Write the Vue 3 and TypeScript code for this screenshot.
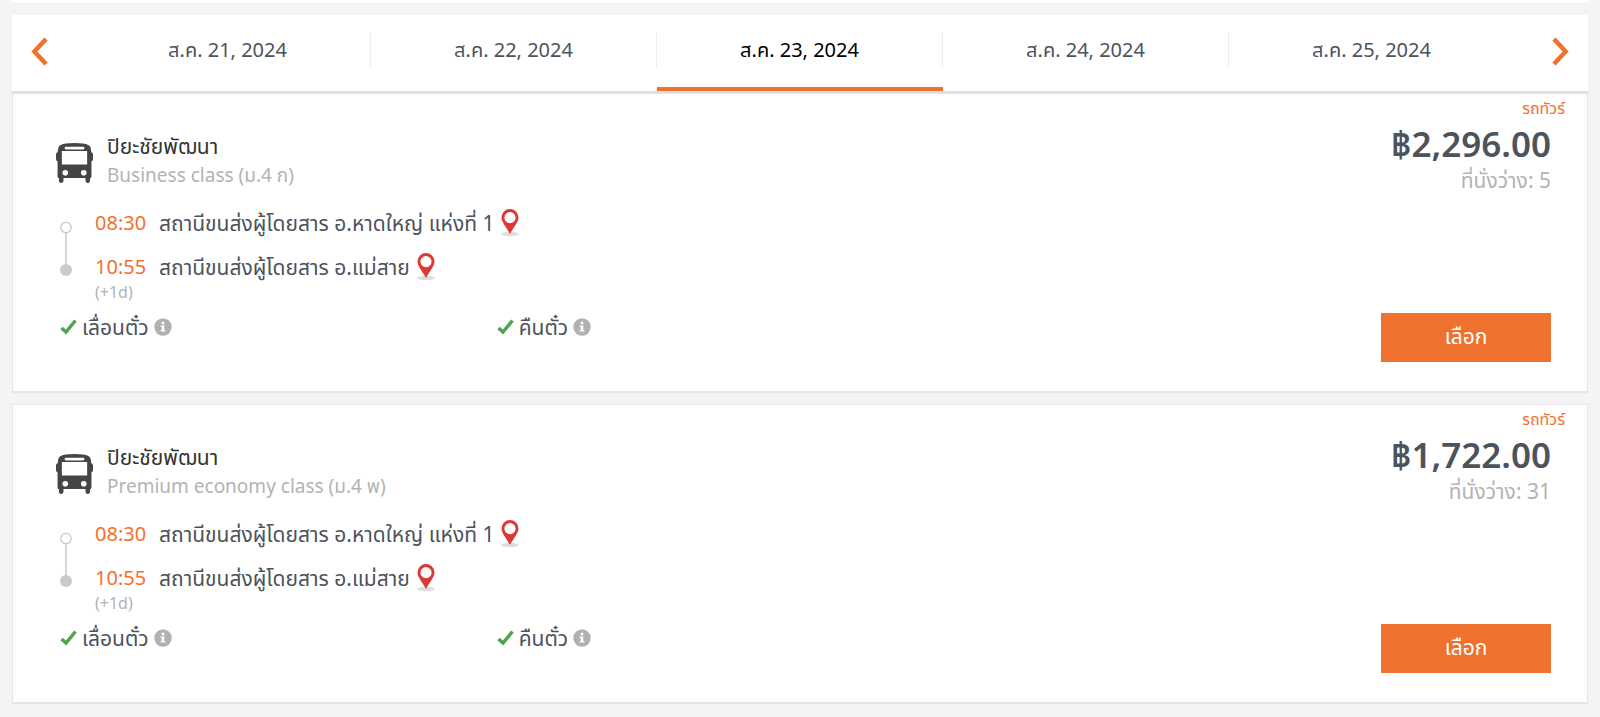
<script setup lang="ts">
import { ref } from 'vue'

interface Stop {
  time: string
  station: string
  note?: string
}

interface Trip {
  id: number
  company: string
  seatClass: string
  price: string
  seats: number
  stops: Stop[]
}

const dates: string[] = [
  'ส.ค. 21, 2024',
  'ส.ค. 22, 2024',
  'ส.ค. 23, 2024',
  'ส.ค. 24, 2024',
  'ส.ค. 25, 2024',
]
const selected = ref(2)

const stops: Stop[] = [
  { time: '08:30', station: 'สถานีขนส่งผู้โดยสาร อ.หาดใหญ่ แห่งที่ 1' },
  { time: '10:55', station: 'สถานีขนส่งผู้โดยสาร อ.แม่สาย', note: '(+1d)' },
]

const trips: Trip[] = [
  { id: 1, company: 'ปิยะชัยพัฒนา', seatClass: 'Business class (ม.4 ก)', price: '฿2,296.00', seats: 5, stops },
  { id: 2, company: 'ปิยะชัยพัฒนา', seatClass: 'Premium economy class (ม.4 พ)', price: '฿1,722.00', seats: 31, stops },
]

const policies: string[] = ['เลื่อนตั๋ว', 'คืนตั๋ว']

function step(delta: number): void {
  selected.value = Math.min(dates.length - 1, Math.max(0, selected.value + delta))
}
</script>

<template>
  <div class="page">
    <div class="strip"></div>
    <nav class="dates">
      <button class="arrow" type="button" aria-label="Previous" @click="step(-1)">
        <svg width="17" height="29" viewBox="0 0 17 29"><path d="M15 2 3.400 14.500 15 27" /></svg>
      </button>
      <div class="tabs">
        <button
          v-for="(date, i) in dates"
          :key="date"
          type="button"
          class="tab"
          :class="{ active: i === selected }"
          @click="selected = i"
        >
          <span>{{ date }}</span>
        </button>
      </div>
      <button class="arrow" type="button" aria-label="Next" @click="step(1)">
        <svg width="17" height="29" viewBox="0 0 17 29"><path d="M2 2 13.600 14.500 2 27" /></svg>
      </button>
    </nav>

    <main class="list">
      <article v-for="trip in trips" :key="trip.id" class="card">
        <section class="main">
          <header class="operator">
            <svg class="bus" width="37" height="40" viewBox="0 0 38 41">
              <path
                fill="#454545"
                fill-rule="evenodd"
                d="M19 0C26 0 31 .8 34 2.4 35.6 3.6 36 6 36.2 9.5 37.4 9.8 38 10.6 38 12v4.5c0 1.3-.6 2-1.6 2.3V34c0 1.200-.5 1.800-1.400 2v2.600c0 1.400-.9 2.400-2.300 2.400s-2.400-1-2.400-2.400V36H7.700v2.600C7.700 40 6.700 41 5.300 41S3 40 3 38.600V36c-.9-.2-1.400-.8-1.400-2V18.800C.6 18.500 0 17.800 0 16.500V12c0-1.400.6-2.200 1.800-2.500C2 6 2.400 3.600 4 2.400 7 .8 12 0 19 0ZM10.200 3.800a1.400 1.400 0 0 0 0 2.800h17.600a1.400 1.400 0 0 0 0-2.800ZM6 8.200V22h26V8.200ZM9.500 27.600a2.900 2.900 0 1 0 0 5.800 2.900 2.900 0 0 0 0-5.800Zm19 0a2.900 2.900 0 1 0 0 5.800 2.900 2.900 0 0 0 0-5.800Z"
              />
            </svg>
            <div>
              <h2 class="company">{{ trip.company }}</h2>
              <p class="class">{{ trip.seatClass }}</p>
            </div>
          </header>

          <div class="route">
            <svg class="track" width="14" height="56" viewBox="0 0 14 56">
              <path d="M7 12v32" stroke="#c9c9c9" stroke-width="1.5" />
              <circle cx="7" cy="6.500" r="5.200" fill="#fff" stroke="#c9c9c9" stroke-width="1.300" />
              <circle cx="7" cy="49" r="6" fill="#cacaca" />
            </svg>
            <ol class="stops">
              <li v-for="stop in trip.stops" :key="stop.time" class="stop">
                <div class="line">
                  <time class="time">{{ stop.time }}</time>
                  <span class="station">{{ stop.station }}</span>
                  <svg class="pin" width="18" height="28" viewBox="0 0 18 28">
                    <ellipse cx="9" cy="25" rx="9" ry="2.200" fill="#dedede" />
                    <path
                      fill="#db3a34"
                      fill-rule="evenodd"
                      d="M9 0a8.500 8.500 0 0 1 8.500 8.500C17.500 13 13 17.500 9 25 5 17.500.5 13 .5 8.500A8.500 8.500 0 0 1 9 0Zm0 3a5.600 5.600 0 1 0 0 11.200A5.600 5.600 0 0 0 9 3Z"
                    />
                  </svg>
                </div>
                <div v-if="stop.note" class="note">{{ stop.note }}</div>
              </li>
            </ol>
          </div>

          <ul class="policies">
            <li v-for="policy in policies" :key="policy">
              <svg width="17" height="16" viewBox="0 0 17 16">
                <path d="M1.500 9 6 13 15.500 1.500" fill="none" stroke="#4da64d" stroke-width="3.500" />
              </svg>
              <span class="policy">{{ policy }}</span>
              <svg width="18" height="18" viewBox="0 0 18 18">
                <circle cx="9" cy="9" r="8.700" fill="#b1b1b1" />
                <path fill="#fff" d="M7.700 3.800h2.600v2.400H7.700ZM6.700 7.400h3.600v4.500h1v1.700H6.700v-1.700h1V9.100h-1Z" />
              </svg>
            </li>
          </ul>
        </section>

        <aside class="side">
          <span class="kind">รถทัวร์</span>
          <strong class="price">{{ trip.price }}</strong>
          <span class="seats">ที่นั่งว่าง: {{ trip.seats }}</span>
          <button class="select" type="button">เลือก</button>
        </aside>
      </article>
    </main>
  </div>
</template>

<style>
body {
  margin: 0;
  background: #f4f4f4;
}
</style>

<style scoped>
.page {
  padding: 0 12px 13px;
  color: #4d535c;
  background: #f4f4f4;
  font-family: 'Noto Sans', 'Noto Sans Thai', 'Open Sans', sans-serif;
  font-size: 20px;
  line-height: 28px;
}
.page * {
  box-sizing: border-box;
}
.strip {
  height: 3px;
  margin-bottom: 12px;
  background: #fff;
}
button {
  padding: 0;
  border: 0;
  background: none;
  color: inherit;
  font: inherit;
  cursor: pointer;
}
.dates {
  display: flex;
  height: 78px;
  border-bottom: 2px solid #dedee0;
  background: #fff;
}
.arrow {
  display: flex;
  align-items: center;
  width: 73px;
  padding: 0 19px 4px;
}
.arrow:last-child {
  justify-content: flex-end;
}
.arrow path {
  fill: none;
  stroke: #ee712e;
  stroke-width: 4.5;
}
.tabs {
  display: flex;
  flex: 1;
}
.tab {
  display: flex;
  flex: 1;
  align-items: flex-start;
  padding-top: 17px;
  border-bottom: 4px solid transparent;
}
.tab span {
  flex: 1;
  border-right: 1px solid #ececf1;
  line-height: 36px;
}
.tab:last-child span {
  border-right-color: transparent;
}
.tab.active {
  border-bottom-color: #ee712e;
  color: #000;
}
.list {
  display: grid;
  gap: 11px;
}
.card {
  display: flex;
  gap: 11px;
  min-height: 300px;
  border: 1px solid #e4e4ec;
  border-width: 1px 1px 2px;
  background: #fff;
}
.main {
  flex: 1;
  padding: 38px 0 0 43px;
}
.operator {
  display: flex;
  align-items: center;
  gap: 14px;
}
.bus {
  margin-top: 4px;
}
h2,
p,
ol,
ul {
  margin: 0;
  padding: 0;
  list-style: none;
}
.company {
  color: #333;
  font-size: 21px;
  font-weight: 400;
  line-height: 29px;
}
.class {
  color: #b3b3b3;
  font-size: 19px;
  line-height: 29px;
}
.route {
  display: flex;
  gap: 22px;
  padding: 11px 0 0 3px;
}
.track {
  margin-top: 20px;
}
.stop .line {
  display: flex;
  align-items: center;
  height: 44px;
}
.time {
  width: 64px;
  color: #f3702e;
}
.station {
  font-size: 21px;
}
.pin {
  margin-left: 7px;
}
.note {
  height: 6px;
  color: #b3b3b3;
  font-size: 16px;
  line-height: 6px;
}
.policies {
  display: grid;
  grid-template-columns: 1fr 2fr;
  padding: 18px 0 0 4px;
}
.policies li {
  display: flex;
  align-items: center;
}
.policy {
  margin: 0 5px;
  font-size: 21px;
}
.side {
  display: flex;
  flex-direction: column;
  align-items: flex-end;
  padding-right: 36px;
}
.kind {
  margin-right: -14px;
  color: #f3702e;
  font-size: 16px;
  line-height: 28px;
}
.price {
  color: #4d535c;
  font-size: 35px;
  font-weight: 600;
  line-height: 44px;
}
.seats {
  color: #b3b3b3;
  font-size: 21px;
}
.select {
  width: 170px;
  height: 49px;
  margin: auto 0 29px;
  padding-bottom: 4px;
  background: #ee712e;
  color: #fff;
  font-size: 21px;
}
</style>
